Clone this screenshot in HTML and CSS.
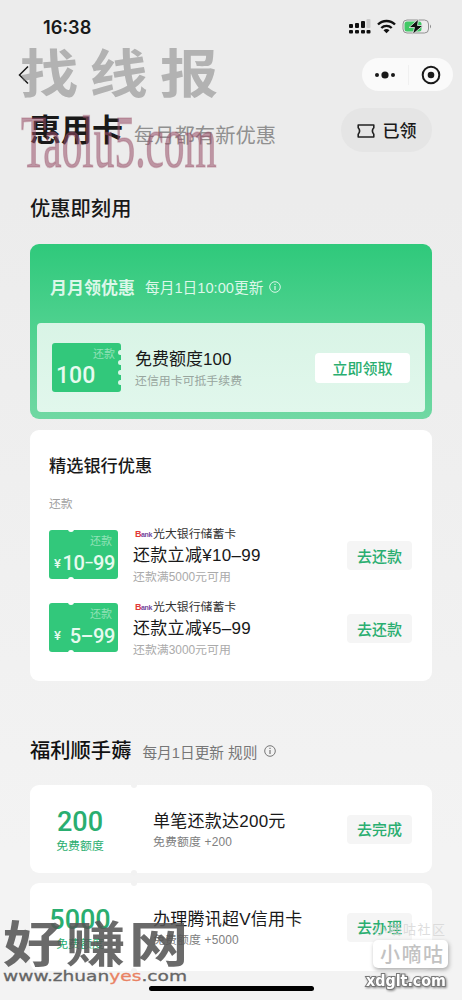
FILE: index.html
```html
<!DOCTYPE html>
<html lang="zh-CN">
<head>
<meta charset="utf-8">
<title>惠用卡</title>
<link rel="stylesheet" href="styles.css">
</head>
<body>
<div class="screen">
  <header class="status">
    <span class="time">16:38</span>
    <svg class="status-icons" width="84" height="16" viewBox="0 0 84 16">
      <g fill="#111"><rect x="0" y="5" width="4" height="4" rx="1"/><rect x="6" y="4" width="4" height="5" rx="1"/><rect x="12" y="2" width="4" height="7" rx="1"/><rect x="0" y="11" width="4" height="3.500" rx="1"/><rect x="6" y="11" width="4" height="3.500" rx="1"/><rect x="12" y="11" width="4" height="3.500" rx="1"/><rect x="17.500" y="11" width="4" height="3.500" rx="1"/></g>
      <rect x="17.500" y="0" width="4" height="9" rx="1" fill="#ccc"/>
      <g fill="none" stroke="#111" stroke-width="2.400"><path d="M29 5.500a12 12 0 0 1 17 0"/><path d="M32.300 9a7.500 7.500 0 0 1 10.400 0"/></g>
      <path d="M34.500 11.300a4.600 4.600 0 0 1 6 0L37.500 14.300z" fill="#111"/>
      <rect x="54" y="1" width="25.500" height="13" rx="4" fill="none" stroke="#929292"/>
      <rect x="55.500" y="2.500" width="17" height="10" rx="2.500" fill="#42c866"/>
      <path d="M81 5.500v4q2-2 0-4" fill="#888"/>
      <path d="M69.500 0L60 8.500h5.500L63.500 15.500 74 6.500h-5.500z" fill="#111" stroke="#ececec" stroke-width=".8"/>
    </svg>
  </header>

  <nav class="nav">
    <svg class="back" width="12" height="20" viewBox="0 0 12 20"><path d="M10 1.500L1.500 10l8.500 8.500" fill="none" stroke="#191919" stroke-width="1.500"/></svg>
    <div class="capsule">
      <svg width="20" height="8" viewBox="0 0 20 8"><circle cx="2" cy="4" r="2"/><circle cx="10" cy="4" r="3.600"/><circle cx="18" cy="4" r="2"/></svg>
      <i class="capsule-line"></i>
      <svg width="20" height="20" viewBox="0 0 20 20"><circle cx="10" cy="10" r="8.300" fill="none" stroke="#191919" stroke-width="2"/><circle cx="10" cy="10" r="3.300"/></svg>
    </div>
  </nav>

  <section class="hero">
    <h1>惠用卡</h1>
    <p>每月都有新优惠</p>
    <button class="claimed">
      <svg width="18" height="14" viewBox="0 0 18 14"><path d="M1.200 1h15.600v2.800q-2.800 3.200 0 6.400V13H1.200v-2.800q2.800-3.200 0-6.400z" fill="none" stroke="#222" stroke-width="1.600" stroke-linejoin="round"/></svg>
      已领
    </button>
  </section>

  <main class="content">
    <h2 class="section-title">优惠即刻用</h2>

    <section class="monthly">
      <div class="monthly-head">
        <b>月月领优惠</b><span>每月1日10:00更新</span>
        <svg width="12" height="12" viewBox="0 0 12 12"><circle cx="6" cy="6" r="5.300" fill="none" stroke="currentColor"/><path d="M6 5v4M6 2.800v1.200" stroke="currentColor" stroke-width="1.200"/></svg>
      </div>
      <div class="monthly-item">
        <div class="ticket ticket-quota">
          <small>还款</small><strong>100</strong>
          <svg class="teeth" width="5" height="49" viewBox="0 0 5 49" fill="#dcf5e8"><circle cx="4.500" cy="9.500" r="2.500"/><circle cx="4.500" cy="19.500" r="2.500"/><circle cx="4.500" cy="29.500" r="2.500"/><circle cx="4.500" cy="39.500" r="2.500"/></svg>
        </div>
        <div class="monthly-text"><h3>免费额度100</h3><p>还信用卡可抵手续费</p></div>
        <button class="get">立即领取</button>
      </div>
    </section>

    <section class="banks">
      <h2>精选银行优惠</h2>
      <p class="group">还款</p>
      <div class="bank-row">
        <div class="ticket ticket-bank"><small>还款</small><strong><i>¥</i><span>10<em>–</em>99</span></strong></div>
        <div class="bank-text">
          <div class="bank-name"><span class="logo"><b>B</b>ank</span>光大银行储蓄卡</div>
          <h3>还款立减¥10–99</h3>
          <p>还款满5000元可用</p>
        </div>
        <button class="go">去还款</button>
      </div>
      <div class="bank-row">
        <div class="ticket ticket-bank"><small>还款</small><strong><i>¥</i><span>5<em class="wide">–</em>99</span></strong></div>
        <div class="bank-text">
          <div class="bank-name"><span class="logo"><b>B</b>ank</span>光大银行储蓄卡</div>
          <h3>还款立减¥5–99</h3>
          <p>还款满3000元可用</p>
        </div>
        <button class="go">去还款</button>
      </div>
    </section>

    <div class="welfare-head">
      <h2>福利顺手薅</h2><span>每月1日更新 规则</span>
      <svg width="12" height="12" viewBox="0 0 12 12"><circle cx="6" cy="6" r="5.300" fill="none" stroke="currentColor"/><path d="M6 5v4M6 2.800v1.200" stroke="currentColor" stroke-width="1.200"/></svg>
    </div>
    <section class="task">
      <div class="amount"><strong>200</strong><span>免费额度</span></div>
      <div class="task-text"><h3>单笔还款达200元</h3><p>免费额度 +200</p></div>
      <button class="go">去完成</button>
    </section>
    <section class="task">
      <div class="amount"><strong>5000</strong><span>免费额度</span></div>
      <div class="task-text"><h3>办理腾讯超V信用卡</h3><p>免费额度 +5000</p></div>
      <button class="go">去办理</button>
    </section>
  </main>

  <div class="home-bar"></div>

  <svg class="overlay" width="462" height="1000" viewBox="0 0 462 1000">
    <g class="mark-brush" transform="translate(20 93) scale(1.120 1)"><text x="0" y="0">找</text><text x="62" y="0">线</text><text x="125" y="0">报</text></g>
    <g transform="translate(21 167) scale(.73 1)"><text class="mark-serif" x="0" y="0" textLength="268" lengthAdjust="spacingAndGlyphs">Taolu5.com</text></g>
    <g transform="translate(3 962) scale(1.220 1)"><text class="mark-earn" x="0" y="0" textLength="152">好赚网</text></g>
    <text class="mark-url" x="3" y="981" textLength="184" lengthAdjust="spacingAndGlyphs">www.zhuan<tspan class="mark-yes">yes</tspan>.com</text>
    <text class="mark-faint" x="374" y="934" textLength="71">小嘀咕社区</text>
    <rect class="mark-box" x="373" y="940" width="75" height="28" rx="5"/>
    <text class="mark-name" x="380" y="962" textLength="63">小嘀咕</text>
    <text class="mark-site" x="366" y="986" textLength="80" lengthAdjust="spacingAndGlyphs">xdglt.com</text>
  </svg>
</div>
</body>
</html>
```

FILE: styles.css
```css
* { box-sizing: border-box; margin: 0; padding: 0; }
body { font-family: "Liberation Sans", "Noto Sans CJK SC", sans-serif; color: #191919; }
button { border: 0; font: inherit; }
h1, h2, h3 { font-weight: 500; }
.screen { position: relative; width: 462px; height: 1000px; overflow: hidden; background: linear-gradient(#ececec 0, #ececec 200px, #f3f3f3 850px); }

.status { height: 54px; padding: 17px 29px 0 43px; display: flex; justify-content: space-between; }
.time { font: 600 18.200px/20px Inter, sans-serif; }
.status-icons { margin-top: 2px; }

.nav { height: 46px; padding: 4px 9px 0 18px; display: flex; justify-content: space-between; }
.back { margin-top: 7px; }
.capsule { width: 91px; height: 33px; border-radius: 17px; background: #fafafa; display: flex; align-items: center; justify-content: space-between; padding: 0 12px 0 13px; fill: #191919; }
.capsule-line { width: 1px; height: 20px; background: #f0f0f0; }

.hero { height: 62px; padding: 8px 30px 0; display: flex; }
.hero h1 { margin-top: 1px; font-size: 31px; font-weight: 700; line-height: 44px; }
.hero p { margin-left: 11px; padding-top: 6px; font-size: 20.300px; line-height: 44px; color: #909090; white-space: nowrap; }
.claimed { margin-left: auto; width: 91px; height: 44px; padding-bottom: 2px; border-radius: 22px; background: #e5e5e5; display: flex; align-items: center; justify-content: center; gap: 8px; font-size: 17px; font-weight: 500; color: #191919; }
.claimed svg { margin-top: 3px; }

.content { padding: 0 30px; }
.section-title { height: 82px; padding-top: 32px; font-size: 20.300px; line-height: 30px; }

.monthly { height: 175px; border-radius: 9px; padding: 0 7px; background: linear-gradient(#2fc97b 0, #4dd18e 45%, #70d8a3 100%); }
.monthly-head { height: 79px; padding: 6px 0 0 13px; display: flex; align-items: center; color: #dcf7e9; }
.monthly-head b { font-size: 17px; font-weight: 700; }
.monthly-head span { margin: 0 6px 0 10px; font-size: 14.700px; }
.monthly-item { height: 89px; border-radius: 4px; background: linear-gradient(#d9f4e6, #e1f7ec); display: flex; align-items: center; padding: 0 15px; }
.monthly-text { margin-left: 14px; padding-top: 3px; }
.monthly-text h3 { font-size: 17px; font-weight: 400; line-height: 24px; }
.monthly-text p { font-size: 11.900px; line-height: 18px; color: #98a59e; }
.get { margin-left: auto; width: 95px; height: 30px; padding-bottom: 1px; border-radius: 4px; background: #fff; color: #2aae70; font-size: 15px; font-weight: 500; }

.ticket { position: relative; width: 69px; height: 49px; border-radius: 3px; background: #32c87b; color: #e7faef; flex: none; }
.ticket small { display: block; padding: 3px 6px 0 0; text-align: right; font-size: 11px; line-height: 17px; color: #91e2b7; }
.ticket strong { display: block; font: 500 23px/26px Roboto, "Noto Sans CJK SC", sans-serif; }
.ticket-quota strong { padding-left: 4px; }
.teeth { position: absolute; right: 0; top: 0; }
.ticket-bank strong { padding: 0 3px 0 5px; display: flex; align-items: center; justify-content: space-between; font-size: 20px; white-space: nowrap; }
.ticket-bank i { font-size: 13px; font-style: normal; }
.ticket-bank span { letter-spacing: -.4px; }
.ticket-bank em { font-size: 14px; font-style: normal; position: relative; top: -2px; }
.ticket-bank .wide { font-size: 20px; top: 0; }
.ticket-bank::before, .ticket-bank::after { content: ""; position: absolute; left: 19px; width: 6px; height: 6px; border-radius: 3px; background: #fff; }
.ticket-bank::before { top: -4px; }
.ticket-bank::after { bottom: -4px; }

.banks { height: 251px; margin-top: 11px; border-radius: 9px; background: #fff; padding: 22px 20px 0 19px; }
.banks h2 { font-size: 17.200px; line-height: 28px; }
.group { margin-top: 14px; font-size: 11.800px; line-height: 20px; color: #a0a0a0; }
.bank-row { height: 73px; display: flex; padding-top: 16px; }
.bank-text { margin: -5px 0 0 15px; }
.bank-name { display: flex; align-items: center; font-size: 11.900px; line-height: 18px; color: #333; }
.logo { width: 20px; padding-left: 2px; font: 700 7px/12px "Liberation Sans", sans-serif; letter-spacing: -.4px; color: #75459c; }
.logo b { color: #e13838; font-size: 9px; }
.bank-text h3 { font-size: 17px; font-weight: 400; line-height: 26px; letter-spacing: .3px; }
.bank-text p { margin-top: -1px; font-size: 11.900px; line-height: 18px; color: #aaa; }
.go { margin: auto 0 auto auto; width: 65px; height: 29px; padding-bottom: 1px; border-radius: 4px; background: #f5f5f5; color: #2aae70; font-size: 15px; font-weight: 500; flex: none; }
.bank-row .go { margin: 11px 0 0 auto; }

.welfare-head { height: 104px; padding-top: 32px; display: flex; align-items: center; color: #777; }
.welfare-head h2 { font-size: 20.300px; color: #111; }
.welfare-head span { margin: 4px 7px 0 11px; font-size: 14.700px; }
.welfare-head svg { margin-top: 4px; }

.task { height: 88px; margin-bottom: 10px; padding-right: 20px; border-radius: 9px; display: flex; background: #fff; position: relative; }
.task::before, .task::after { content: ""; position: absolute; left: 101px; width: 6px; height: 6px; border-radius: 50%; background: #f2f2f2; }
.task::before { top: -3px; }
.task::after { bottom: -3px; }
.amount { width: 104px; padding: 22px 4px 0 0; display: flex; flex-direction: column; align-items: center; color: #2aae70; }
.amount strong { font: 500 27px/30px Roboto, sans-serif; }
.amount span { font-size: 11.900px; line-height: 18px; }
.task-text { margin-left: 19px; padding-top: 24px; }
.task-text h3 { font-size: 17px; font-weight: 400; line-height: 26px; letter-spacing: .25px; white-space: nowrap; }
.task-text p { margin-top: -1px; font-size: 11.900px; line-height: 17px; letter-spacing: .15px; color: #808080; }

.home-bar { position: absolute; left: 149px; top: 986px; width: 165px; height: 5px; border-radius: 3px; background: #000; }
.overlay { position: absolute; inset: 0; pointer-events: none; }
.overlay text { font-family: "Noto Sans CJK SC", sans-serif; }
.mark-brush text { font-size: 52px; font-weight: 700; fill: #777; fill-opacity: .5; }
.overlay .mark-serif { font-family: "Liberation Serif", serif; font-size: 75px; fill: #984e67; fill-opacity: .55; stroke: #984e67; stroke-opacity: .3; stroke-width: 1.500px; }
.overlay .mark-earn { font-size: 49px; font-weight: 700; fill: #555; fill-opacity: .88; }
.overlay .mark-url { font-family: "DejaVu Sans", sans-serif; font-size: 14.500px; fill: #666; stroke: #666; stroke-width: .3px; }
.overlay .mark-yes { fill: #e98263; stroke: #e98263; }
.overlay .mark-faint { font-size: 13px; fill: #d5d5d5; fill-opacity: .8; }
.mark-box { fill: #fff; filter: drop-shadow(1px 2px 2px #aaa); }
.overlay .mark-name { font-size: 20px; font-weight: 500; fill: #c2c2c2; }
.overlay .mark-site { font-family: "DejaVu Sans", sans-serif; font-size: 15px; font-weight: 700; fill: #fff; stroke: #777; stroke-width: 2px; paint-order: stroke; filter: drop-shadow(1px 1px 1px #888); }
```
